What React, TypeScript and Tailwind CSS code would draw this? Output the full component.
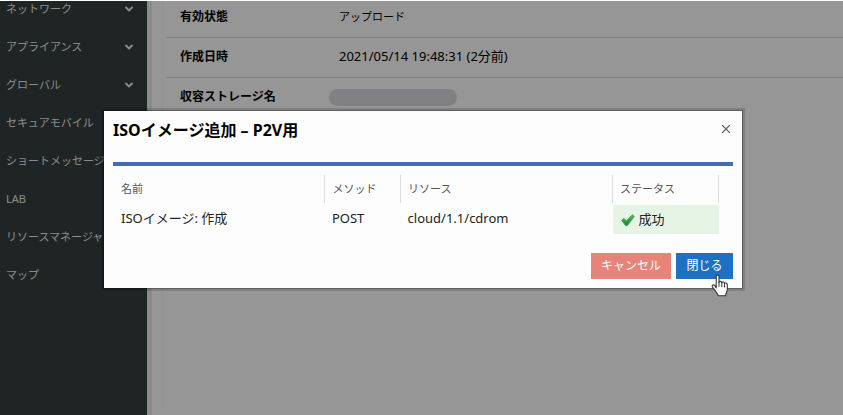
import { ChevronDown, X } from "lucide-react";

const font = "font-['Noto_Sans','Noto_Sans_CJK_JP',sans-serif]";

const menu = [
  { label: "ネットワーク", open: true },
  { label: "アプライアンス", open: true },
  { label: "グローバル", open: true },
  { label: "セキュアモバイル", open: false },
  { label: "ショートメッセージ", open: false },
  { label: "LAB", open: false },
  { label: "リソースマネージャ", open: false },
  { label: "マップ", open: false },
];

function Sidebar() {
  return (
    <nav className="w-[147px] shrink-0 overflow-hidden bg-[#323e3c] text-[#e5e5e5]">
      <ul className="-mt-[11px]">
        {menu.map((item) => (
          <li key={item.label}>
            <a href="#" className="flex h-[38px] items-center justify-between whitespace-nowrap pl-1.5 pr-3 text-[11px]">
              {item.label}
              {item.open && <ChevronDown className="h-3 w-3" strokeWidth={4} />}
            </a>
          </li>
        ))}
      </ul>
    </nav>
  );
}

function Details() {
  return (
    <main className="flex-1 overflow-hidden border-l-[5px] border-[#e8e8e8] pl-[10px]">
      <div className="h-full border-l border-[#f3f3ee] pl-[3px]">
        <table className="-mt-1 w-full text-left">
          <tbody>
            <tr className="h-10 border-b border-[#d8d8d8]">
              <th className="w-[173px] pl-3.5 text-xs font-bold">有効状態</th>
              <td className="text-[11px]">アップロード</td>
            </tr>
            <tr className="h-10 border-b border-[#d8d8d8]">
              <th className="pl-3.5 text-xs font-bold">作成日時</th>
              <td className="text-[13px]">2021/05/14 19:48:31 (2分前)</td>
            </tr>
            <tr className="h-10">
              <th className="pl-3.5 text-xs font-bold">収容ストレージ名</th>
              <td>
                <div className="-ml-2.5 h-[17px] w-32 rounded-full bg-[#d5d7de]" />
              </td>
            </tr>
          </tbody>
        </table>
      </div>
    </main>
  );
}

function CheckMark() {
  return (
    <svg viewBox="0 0 14 14" className="h-3.5 w-3.5" aria-hidden="true">
      <defs>
        <linearGradient id="check" x1="0" y1="0" x2="0" y2="1">
          <stop offset="0" stopColor="#5cc05c" />
          <stop offset="1" stopColor="#138a2a" />
        </linearGradient>
      </defs>
      <path d="M0.6 7.4 3 5.4 5.3 7.8 11.4 1.8 13.4 3.4 6.3 12.6 4.6 12.6Z" fill="url(#check)" stroke="#2f9e44" strokeWidth="0.8" strokeLinejoin="round" />
    </svg>
  );
}

function HandCursor() {
  return (
    <svg viewBox="0 0 18 23" className="pointer-events-none absolute left-[35px] top-[21px] h-[23px] w-[18px]" aria-hidden="true">
      <path
        d="M5.2 14V2.6C5.2 .6 8 .6 8 2.6V8.4C8.2 7 10.6 7 10.8 8.8 11.2 7.6 13.4 7.8 13.5 9.6 14 8.6 16.3 8.8 16.3 10.8V15.5C16.3 18 14.8 19 14.6 21.8H7.2C7 19.4 4.8 18 3.6 15.8 2.8 14.2 1.6 13.4 1.2 12.4 .9 11 2.6 10.4 3.6 11.4Z"
        fill="#fff"
        stroke="#333"
        strokeWidth="1.1"
        strokeLinejoin="round"
      />
      <path d="M8 8.4V12.4M10.8 8.8V12.6M13.5 9.6V13" fill="none" stroke="#333" strokeWidth="1" strokeLinecap="round" />
    </svg>
  );
}

function Dialog() {
  return (
    <div role="dialog" aria-labelledby="dialog-title" className="w-full bg-[#fdfdfd] px-[9px] pb-[9px] shadow-[0_0_0_1px_rgba(0,0,0,0.25),0_0_0_3px_rgba(0,0,0,0.15)]">
      <div className="flex h-[51px] items-start justify-between pt-[7px]">
        <h1 id="dialog-title" className="text-base leading-6 font-bold">ISOイメージ追加 – P2V用</h1>
        <button type="button" aria-label="閉じる" className="mt-1 text-[#666]">
          <X className="h-3.5 w-3.5" strokeWidth={2} />
        </button>
      </div>
      <div className="h-1 bg-[#456bb5]" />
      <div className="pr-3.5 pt-[9px]">
        <table className="w-full table-fixed text-left">
          <colgroup>
            <col className="w-[35%]" />
            <col className="w-[12.5%]" />
            <col className="w-[35%]" />
            <col className="w-[17.5%]" />
          </colgroup>
          <thead>
            <tr className="h-7 text-[11px] text-[#555]">
              <th className="pl-2 font-normal">名前</th>
              <th className="border-l border-[#ddd] pl-[7px] font-normal">メソッド</th>
              <th className="border-l border-[#ddd] pl-[7px] font-normal">リソース</th>
              <th className="border-x border-[#ddd] pl-[7px] font-normal">ステータス</th>
            </tr>
          </thead>
          <tbody>
            <tr className="h-8 text-[13px] text-[#222]">
              <td className="pl-2">ISOイメージ: 作成</td>
              <td className="pl-[7px]">POST</td>
              <td className="pl-[7px]">cloud/1.1/cdrom</td>
              <td className="pt-px">
                <div className="flex h-[29px] items-center gap-1 bg-[#e6f4e6] pl-2">
                  <CheckMark />
                  成功
                </div>
              </td>
            </tr>
          </tbody>
        </table>
      </div>
      <div className="mt-[18px] flex justify-end gap-[5px] text-xs text-white">
        <button type="button" className="h-[26px] w-20 bg-[#e88379]">キャンセル</button>
        <div className="relative">
          <button type="button" className="h-[26px] w-[57px] bg-[#1d71c5]">閉じる</button>
          <HandCursor />
        </div>
      </div>
    </div>
  );
}

export default function App() {
  return (
    <div className={`relative flex h-screen overflow-hidden border-t border-white bg-[#fafafa] text-black ${font}`}>
      <Sidebar />
      <Details />
      <div className="absolute inset-0 flex items-start bg-black/40 pl-[104px] pr-[101px] pt-[110px]">
        <Dialog />
      </div>
    </div>
  );
}
